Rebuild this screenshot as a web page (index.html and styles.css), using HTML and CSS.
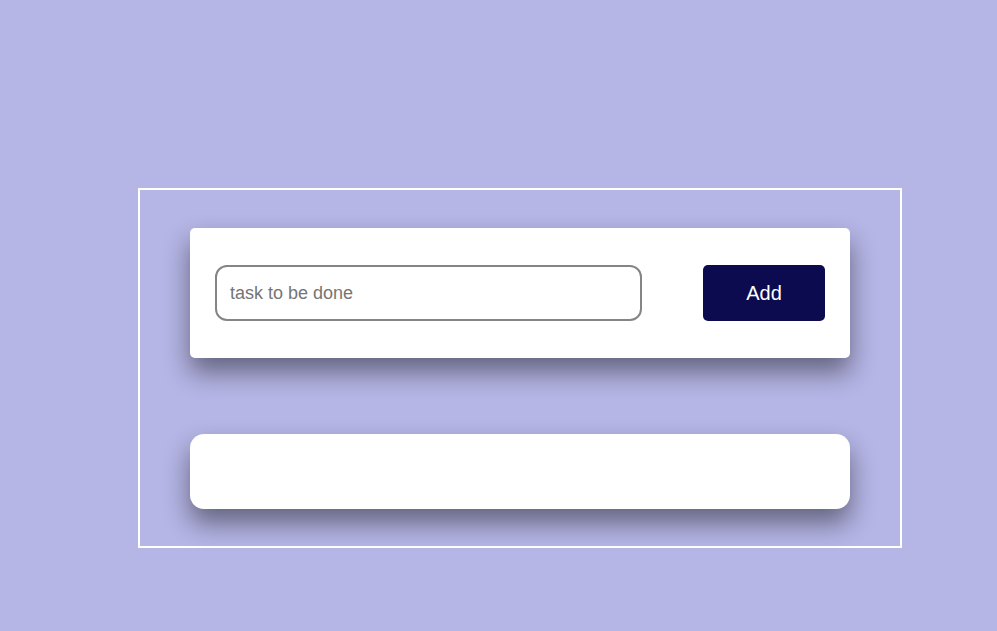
FILE: index.html
```html
<!DOCTYPE html>
<html>
<head>
<meta charset="utf-8">
<link rel="stylesheet" href="styles.css">
</head>
<body>
<div class="wrap">
  <div class="card form-card">
    <input class="task-input" type="text" placeholder="task to be done">
    <button class="add-btn">Add</button>
  </div>
  <div class="card list-card"></div>
</div>
</body>
</html>
```
FILE: styles.css
```css
html, body {
  margin: 0;
  padding: 0;
  background: #b5b5e6;
  font-family: "Liberation Sans", Arial, sans-serif;
}
body {
  padding: 188px 0 0 138px;
  min-height: 631px;
  box-sizing: border-box;
}
.wrap {
  width: 764px;
  height: 360px;
  box-sizing: border-box;
  border: 2px solid #ffffff;
  padding: 38px 50px 0 50px;
  display: flex;
  flex-direction: column;
  gap: 76px;
}
.card {
  background: #ffffff;
  box-shadow: 0 14px 26px rgba(0, 0, 0, 0.45);
}
.form-card {
  height: 130px;
  border-radius: 5px;
  box-sizing: border-box;
  padding: 0 25px;
  display: flex;
  align-items: center;
  justify-content: space-between;
}
.task-input {
  width: 427px;
  height: 56px;
  box-sizing: border-box;
  border: 2px solid #858585;
  border-radius: 12px;
  padding: 0 13px;
  font-family: "Liberation Sans", Arial, sans-serif;
  font-size: 18px;
  color: #333;
  outline: none;
}
.task-input::placeholder {
  color: #757575;
}
.add-btn {
  width: 122px;
  height: 56px;
  border: none;
  border-radius: 5px;
  background: #0c0b4f;
  color: #ffffff;
  font-family: "Liberation Sans", Arial, sans-serif;
  font-size: 20px;
}
.list-card {
  height: 75px;
  border-radius: 14px;
}
```
